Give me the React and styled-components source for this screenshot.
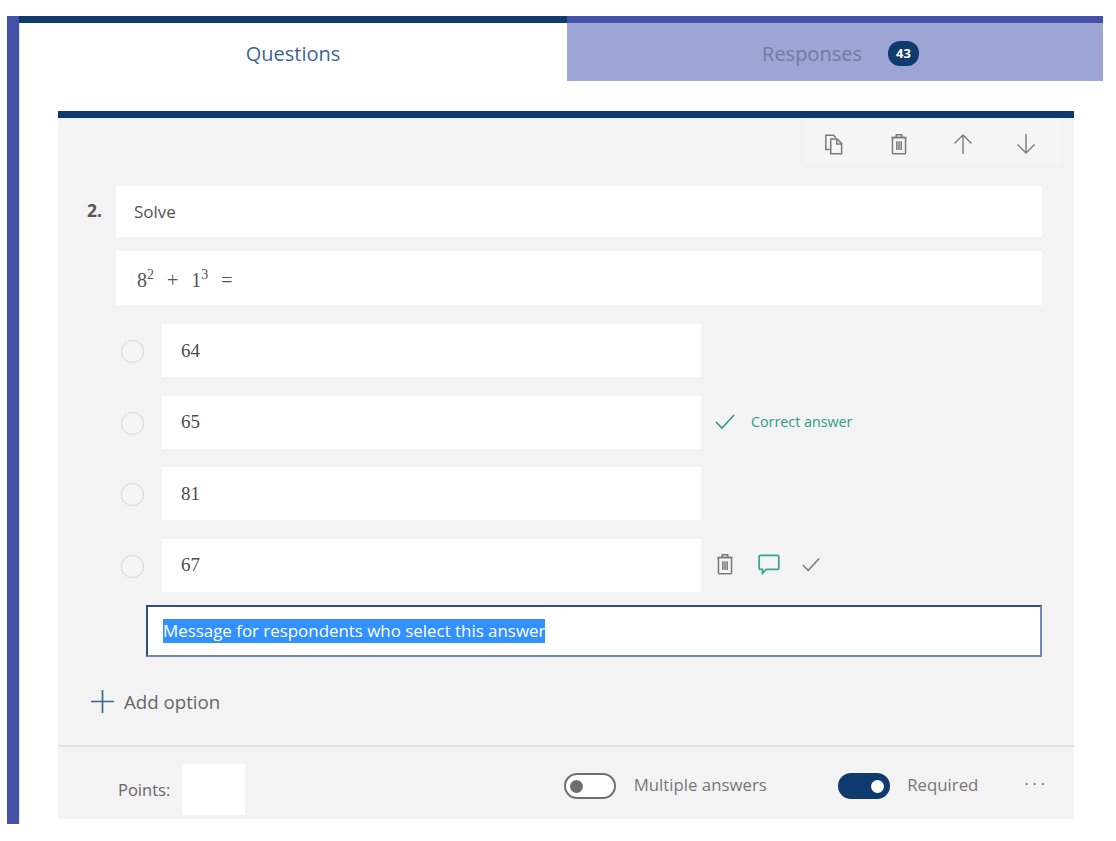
import React from "react";
import styled, { createGlobalStyle } from "styled-components";

const Global = createGlobalStyle`
  html, body { margin: 0; padding: 0; background: #fff; }
  body { font-family: "Open Sans", "Noto Sans", sans-serif; }
`;
const Frame = styled.div`
  margin: 16px 0 0 7px; width: 1096px; height: 808px; box-sizing: border-box;
  border-left: 12px solid #4352a8; background: #fff; box-shadow: inset 1px 0 0 #dfe3f5;
`;
const Tabs = styled.div`display: flex; height: 65px;`;
const Tab = styled.div`
  box-sizing: border-box; flex: none; width: ${p => p.$active ? 548 : 536}px; height: 65px;
  display: flex; align-items: center; justify-content: center; gap: 26px;
  border-top: 7px solid ${p => p.$active ? "#0f3a6d" : "#4352a8"};
  background: ${p => p.$active ? "transparent" : "#9da5d4"};
  padding-left: ${p => p.$active ? 0 : 11}px; padding-top: 2px;
  color: ${p => p.$active ? "#3d6593" : "#757a9e"}; font-size: 20px;
`;
const Badge = styled.span`
  width: 31px; height: 25px; border-radius: 12px; background: #0f3a6d; color: #fff;
  font-size: 13px; font-weight: 700; display: flex; align-items: center; justify-content: center;
`;
const Card = styled.section`
  box-sizing: border-box; margin: 30px 0 0 39px; width: 1016px; height: 708px;
  border-top: 7px solid #0f3a6d; background: #f3f3f3; display: flex; flex-direction: column;
`;
const Toolbar = styled.div`
  align-self: flex-end; margin-right: 14px; width: 255px; height: 45px; box-sizing: border-box;
  display: flex; gap: 41px; align-items: center;
  background: #f5f5f5; padding: 6px 0 0 17px;
`;
const Body = styled.div`padding: 23px 32px 0 29px; display: flex; flex-direction: column;`;
const QuestionRow = styled.div`display: flex; align-items: flex-start;`;
const Num = styled.div`
  width: 29px; flex: none; padding-top: 14px; font-size: 17.5px; line-height: 20px; font-weight: 700; color: #555;
`;
const Field = styled.div`
  box-sizing: border-box; background: #fff; display: flex; align-items: center;
  height: ${p => p.$h}px; flex: 1;
`;
const Title = styled(Field)`padding-left: 18px; font-size: 17px; color: #555;`;
const Formula = styled(Field)`
  margin: 14px 0 0 29px; padding: 4px 0 0 21px; flex: none; font: 20px "Liberation Serif", serif; color: #555;
  gap: 13px;
  sup { font-size: 14px; line-height: 0; vertical-align: 8px; }
`;
const Options = styled.div`display: flex; flex-direction: column; gap: 18.67px; margin: 19px 0 0 29px;`;
const OptionRow = styled.div`display: flex; align-items: center; height: 53px;`;
const Radio = styled.span`
  box-sizing: border-box; width: 23px; height: 23px; border-radius: 50%; border: 1.5px solid #d4d4d4;
  margin: 2px 0 0 5px; background: #f5f5f5; flex: none;
`;
const Answer = styled.div`
  margin-left: 18px; width: 539px; height: 53px; box-sizing: border-box; background: #fff; padding-left: 19px;
  display: flex; align-items: center; font: 19px "Liberation Serif", serif; color: #4c4c4c; flex: none;
`;
const Correct = styled.div`
  display: flex; align-items: center; gap: 15px; margin: -2px 0 0 13px; color: #2f9b8b; font-size: 14.3px;
`;
const RowActions = styled.div`display: flex; align-items: center; gap: 20px; margin: -2px 0 0 12px;`;
const Message = styled.div`
  box-sizing: border-box; margin: 13px 0 0 59px; height: 52px; padding-left: 15px;
  border: 2px solid #2f4f85; border-bottom-color: #7088ae; border-right-color: #7088ae; background: #fff;
  display: flex; align-items: center; font-size: 16.9px;
`;
const Selected = styled.span`background: #3390ff; color: #fff; line-height: 24px;`;
const AddOption = styled.div`
  display: flex; align-items: center; gap: 10px; margin: 33px 0 0 4px; height: 24px; color: #666; font-size: 18.7px;
`;
const Footer = styled.div`
  margin-top: 31px; border-top: 2px solid #e2e2e2; flex: 1; display: flex; align-items: center; padding-left: 60px;
`;
const Points = styled.span`font-size: 16.5px; color: #666; padding-top: 13px;`;
const PointsBox = styled.div`width: 63px; height: 51px; background: #fff; margin: 14px 0 0 12px;`;
const Toggle = styled.span`
  box-sizing: border-box; width: 52px; height: 26px; border-radius: 13px; flex: none; display: flex; align-items: center;
  border: 2px solid ${p => p.$on ? "#0f3a6d" : "#6e6e6e"}; background: ${p => p.$on ? "#0f3a6d" : "#fff"};
  justify-content: ${p => p.$on ? "flex-end" : "flex-start"}; padding: 0 4px; margin-left: ${p => p.$ml}px; margin-top: 7px;
  &::after { content: ""; width: 13px; height: 13px; border-radius: 50%; background: ${p => p.$on ? "#fff" : "#6e6e6e"}; }
`;
const ToggleLabel = styled.span`font-size: 16.8px; color: #777; margin-left: 17.5px; margin-top: 3px;`;
const More = styled.span`margin-left: 46px; margin-top: 3px; letter-spacing: 4px; font-size: 16px; color: #666;`;

const Stroke = ({ size = 24, color = "#7a7a7a", w = 1.4, children }) => (
  <svg width={size} height={size} viewBox="0 0 22 22" fill="none" stroke={color} strokeWidth={w}>{children}</svg>
);
const CopyIcon = () => (
  <Stroke><path d="M7 16H3.5V3h7l2.2 2.2" /><path d="M8 6.5h6l4 4V20H8z" /><path d="M13.5 6.5V11H18" /></Stroke>
);
const TrashIcon = () => (
  <Stroke><path d="M4 5h14M8.5 5V2.6h5V5" /><rect x="5" y="5" width="12" height="15" rx="1" /><path d="M9 8.5v8M11 8.5v8M13 8.5v8" /></Stroke>
);
const UpIcon = () => <Stroke size={22}><path d="M11 21V2M2.5 10.5 11 2l8.5 8.5" /></Stroke>;
const DownIcon = () => <Stroke size={22}><path d="M11 1v19M2.5 11.5 11 20l8.5-8.5" /></Stroke>;
const Check = ({ color = "#2f9b8b", size = 22 }) => <Stroke size={size} color={color} w={1.6}><path d="M2 12l6 6L20 5" /></Stroke>;
const Comment = () => (
  <Stroke size={24} color="#35a594" w={1.6}>
    <path d="M3 3h16a1 1 0 0 1 1 1v11a1 1 0 0 1-1 1H8.5L5 19.5V16H3a1 1 0 0 1-1-1V4a1 1 0 0 1 1-1z" />
  </Stroke>
);
const Plus = () => <Stroke size={23} color="#3d6593" w={1.6}><path d="M11 0v22M0 11h22" /></Stroke>;

const Option = ({ value, children }) => (
  <OptionRow><Radio /><Answer>{value}</Answer>{children}</OptionRow>
);

export default function App() {
  return (
    <>
      <Global />
      <Frame>
        <Tabs>
          <Tab $active>Questions</Tab>
          <Tab>Responses<Badge>43</Badge></Tab>
        </Tabs>
        <Card>
          <Toolbar><CopyIcon /><TrashIcon /><UpIcon /><DownIcon /></Toolbar>
          <Body>
            <QuestionRow><Num>2.</Num><Title $h={51}>Solve</Title></QuestionRow>
            <Formula $h={54}><span>8<sup>2</sup></span><span>+</span><span>1<sup>3</sup></span><span>=</span></Formula>
            <Options>
              <Option value="64" />
              <Option value="65"><Correct><Check />Correct answer</Correct></Option>
              <Option value="81" />
              <Option value="67">
                <RowActions><TrashIcon /><Comment /><Check color="#7a7a7a" size={20} /></RowActions>
              </Option>
            </Options>
            <Message><Selected>Message for respondents who select this answer</Selected></Message>
            <AddOption><Plus />Add option</AddOption>
          </Body>
          <Footer>
            <Points>Points:</Points>
            <PointsBox />
            <Toggle $ml={319} />
            <ToggleLabel>Multiple answers</ToggleLabel>
            <Toggle $on $ml={71} />
            <ToggleLabel>Required</ToggleLabel>
            <More>···</More>
          </Footer>
        </Card>
      </Frame>
    </>
  );
}
